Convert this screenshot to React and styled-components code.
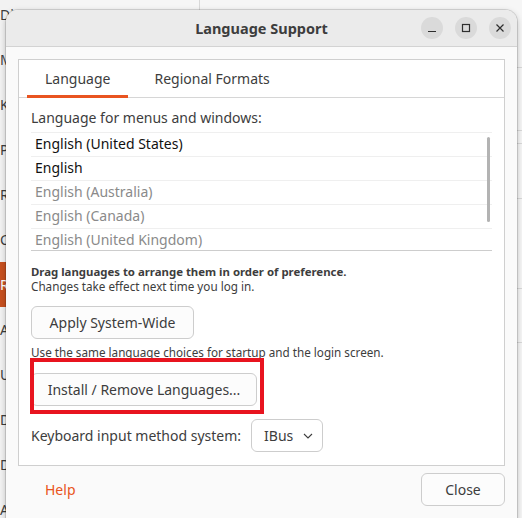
import React from 'react'
import styled, { createGlobalStyle } from 'styled-components'

const GlobalStyle = createGlobalStyle`
  html, body { margin: 0; padding: 0; }
  body {
    font-family: "Noto Sans", "DejaVu Sans", sans-serif;
    background: #f4f4f4;
    overflow: hidden;
  }
`

const sidebarItems = ['Di', 'M', 'K', 'P', 'R', 'C', 'R', 'A', 'U', 'D', 'D', 'A']
const languages = [
  { name: 'English (United States)', active: true },
  { name: 'English', active: true },
  { name: 'English (Australia)', active: false },
  { name: 'English (Canada)', active: false },
  { name: 'English (United Kingdom)', active: false },
]

const App = () => {
  return (
    <Desktop>
      <GlobalStyle />
      <Backdrop>
        <Sidebar>
          {sidebarItems.map((s, i) => (
            <SideItem key={i} $selected={i === 6}>{s}</SideItem>
          ))}
        </Sidebar>
        <TopDivider />
        <RightPane>
          <RightLine $top={67} />
          <RightLine $top={130} />
          <RightLine $top={143} />
          <RightLine $top={198} />
          <RightLine $top={288} />
          <RightLine $top={342} />
        </RightPane>
      </Backdrop>

      <Window>
        <TitleBar>
          <Title>Language Support</Title>
          <Controls>
            <CtrlButton>
              <svg width="12" height="12" viewBox="0 0 12 12">
                <path d="M2 9.5h8" stroke="#2e2e2e" strokeWidth="1.2" />
              </svg>
            </CtrlButton>
            <CtrlButton>
              <svg width="12" height="12" viewBox="0 0 12 12">
                <rect x="2.5" y="2.5" width="7" height="7" fill="none" stroke="#2e2e2e" strokeWidth="1.2" />
              </svg>
            </CtrlButton>
            <CtrlButton>
              <svg width="12" height="12" viewBox="0 0 12 12">
                <path d="M2.5 2.5l7 7M9.5 2.5l-7 7" stroke="#2e2e2e" strokeWidth="1.2" />
              </svg>
            </CtrlButton>
          </Controls>
        </TitleBar>

        <Body>
          <Notebook>
            <Tabs>
              <Tab $active>Language</Tab>
              <Tab>Regional Formats</Tab>
            </Tabs>
            <Page>
              <Label>Language for menus and windows:</Label>
              <LangList>
                {languages.map((l) => (
                  <LangRow key={l.name} $active={l.active}>{l.name}</LangRow>
                ))}
                <Scrollbar />
              </LangList>
              <Hint $top={13} $bottom={12}>
                <HintLine $bold>Drag languages to arrange them in order of preference.</HintLine>
                <HintLine>Changes take effect next time you log in.</HintLine>
              </Hint>
              <Button $width={163}>Apply System-Wide</Button>
              <Hint $top={6} $bottom={13}>
                <HintLine>Use the same language choices for startup and the login screen.</HintLine>
              </Hint>
              <Highlighted>
                <Button $width={226}>Install / Remove Languages...</Button>
                <RedBox />
              </Highlighted>
              <KeyboardRow>
                <span>Keyboard input method system:</span>
                <Combo>
                  IBus
                  <svg width="12" height="8" viewBox="0 0 12 8">
                    <path d="M2 2l4 4 4-4" fill="none" stroke="#3d3d3d" strokeWidth="1.1" />
                  </svg>
                </Combo>
              </KeyboardRow>
            </Page>
          </Notebook>
          <Footer>
            <HelpButton>Help</HelpButton>
            <Button $width={84}>Close</Button>
          </Footer>
        </Body>
      </Window>
    </Desktop>
  )
}

const Desktop = styled.div`
  position: relative;
  width: 522px;
  height: 518px;
  overflow: hidden;
  background: #f6f6f6;
`

const Backdrop = styled.div`
  display: flex;
  height: 100%;
`

const Sidebar = styled.div`
  width: 60px;
  display: flex;
  flex-direction: column;
  margin-top: -8px;
  background: #f2f2f2;
`

const SideItem = styled.div`
  height: 45px;
  flex-shrink: 0;
  display: flex;
  align-items: center;
  font-size: 14px;
  color: ${(p) => (p.$selected ? '#ffffff' : '#3d3d3d')};
  background: ${(p) => (p.$selected ? '#c7501f' : 'transparent')};
`

const TopDivider = styled.div`
  width: 1px;
  margin-left: 139px;
  height: 12px;
  background: #d8d8d8;
`

const RightPane = styled.div`
  position: relative;
  flex: 1;
`

const RightLine = styled.div`
  position: absolute;
  right: 0;
  width: 8px;
  top: ${(p) => p.$top}px;
  height: 1px;
  background: #d9d9d9;
`

const Window = styled.div`
  position: absolute;
  left: 6px;
  top: 10px;
  width: 511px;
  height: 530px;
  background: #fafafa;
  border-radius: 12px 12px 0 0;
  box-shadow: 0 0 0 1px rgba(0, 0, 0, 0.12), 0 2px 6px rgba(0, 0, 0, 0.25);
  display: flex;
  flex-direction: column;
  overflow: hidden;
  color: #3d3d3d;
`

const TitleBar = styled.div`
  position: relative;
  height: 36px;
  flex-shrink: 0;
  background: #ebebeb;
  border-bottom: 1px solid #d3d3d3;
  display: flex;
  align-items: center;
  justify-content: center;
`

const Title = styled.div`
  font-weight: 700;
  font-size: 14.5px;
  color: #3d3d3d;
`

const Controls = styled.div`
  position: absolute;
  right: 6px;
  top: 7px;
  display: flex;
  gap: 12px;
`

const CtrlButton = styled.div`
  width: 22px;
  height: 22px;
  border-radius: 50%;
  background: #dadada;
  display: flex;
  align-items: center;
  justify-content: center;
`

const Body = styled.div`
  padding: 12px 12px 0 12px;
  display: flex;
  flex-direction: column;
`

const Notebook = styled.div`
  border: 1px solid #cfcfcf;
  background: #ffffff;
`

const Tabs = styled.div`
  height: 37px;
  display: flex;
  gap: 8px;
  padding-left: 8px;
  border-bottom: 1px solid #d6d6d6;
`

const Tab = styled.div`
  padding: 0 18px;
  display: flex;
  align-items: center;
  font-size: 14px;
  color: #3d3d3d;
  border-bottom: 3px solid ${(p) => (p.$active ? '#e95420' : 'transparent')};
  margin-bottom: -1px;
  padding-top: 1px;
`

const Page = styled.div`
  padding: 10px 12px 13px 12px;
  display: flex;
  flex-direction: column;
  align-items: flex-start;
  font-size: 14px;
`

const Label = styled.div`
  line-height: 20px;
  margin-bottom: 4px;
`

const LangList = styled.div`
  position: relative;
  align-self: stretch;
  height: 117px;
  overflow: hidden;
  border-top: 1px solid #efefef;
  border-bottom: 1px solid #cdcdcd;
`

const LangRow = styled.div`
  height: 23px;
  line-height: 22px;
  padding-left: 4px;
  font-size: 14px;
  color: ${(p) => (p.$active ? '#111111' : '#8a8a8a')};
  border-bottom: 1px solid #efefef;
`

const Scrollbar = styled.div`
  position: absolute;
  right: 2px;
  top: 4px;
  width: 3px;
  height: 85px;
  border-radius: 2px;
  background: #b3b3b3;
`

const Hint = styled.div`
  margin-top: ${(p) => p.$top}px;
  margin-bottom: ${(p) => p.$bottom}px;
`

const HintLine = styled.div`
  font-size: ${(p) => (p.$bold ? '11.4px' : '11.7px')};
  line-height: 15px;
  height: 15px;
  overflow: visible;
  font-weight: ${(p) => (p.$bold ? 700 : 400)};
`

const Button = styled.div`
  box-sizing: border-box;
  width: ${(p) => p.$width}px;
  height: 33px;
  border: 1px solid #cdcdcd;
  border-radius: 6px;
  background: #fcfcfc;
  display: flex;
  align-items: center;
  justify-content: center;
  font-size: 14px;
  color: #3d3d3d;
`

const Highlighted = styled.div`
  position: relative;
`

const RedBox = styled.div`
  position: absolute;
  left: -1px;
  top: -15px;
  width: 234px;
  height: 56px;
  box-sizing: border-box;
  border: 4px solid #e8141f;
`

const KeyboardRow = styled.div`
  margin-top: 13px;
  display: flex;
  align-items: center;
  gap: 10px;
`

const Combo = styled.div`
  box-sizing: border-box;
  height: 33px;
  width: 72px;
  border: 1px solid #cdcdcd;
  border-radius: 6px;
  display: flex;
  align-items: center;
  gap: 9px;
  padding-left: 12px;
`

const Footer = styled.div`
  display: flex;
  justify-content: space-between;
  align-items: center;
  padding-top: 7px;
`

const HelpButton = styled.div`
  margin-left: 13px;
  padding: 0 14px;
  height: 33px;
  display: flex;
  align-items: center;
  font-size: 14px;
  color: #e95420;
`

export default App
